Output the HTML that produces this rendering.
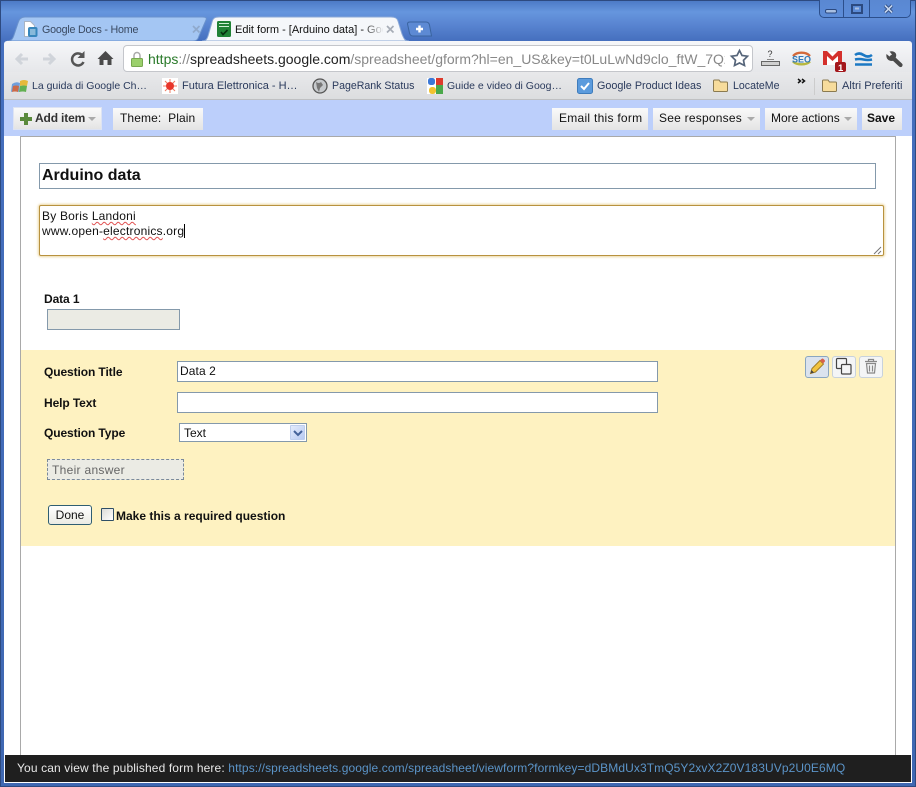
<!DOCTYPE html>
<html><head><meta charset="utf-8"><style>
html,body{margin:0;padding:0}
body{width:916px;height:787px;overflow:hidden;position:relative;background:#fff;font-family:"Liberation Sans",sans-serif;font-size:12px;color:#111}
.a{position:absolute;white-space:nowrap}
.bm{position:absolute;top:79px;color:#2a3a5c;white-space:nowrap;line-height:14px}
.btn{position:absolute;top:108px;height:22px;line-height:21px;background:linear-gradient(#fafafa,#e4e4e4);font-size:12px;color:#111;box-sizing:border-box;white-space:nowrap;letter-spacing:.2px}
.tr{position:absolute;top:117px;width:0;height:0;border:4px solid transparent;border-top:4px solid #aaa;border-bottom:0}
.lbl{position:absolute;font-weight:bold;font-size:12px;left:44px;white-space:nowrap;color:#111;line-height:14px;letter-spacing:-.1px}
.inp{position:absolute;box-sizing:border-box;background:#fff;border:1px solid #8499ab}
svg{position:absolute;overflow:visible}
</style></head><body>
<!-- frame -->
<div class="a" style="left:0;top:0;width:916px;height:787px;background:linear-gradient(#4a78c4 0,#6696de 12px,#5c88d4 22px,#456fbe 41px,#3f68b2 100%)"></div>
<div class="a" style="left:0;top:0;width:916px;height:1px;background:#2d4a80"></div>
<div class="a" style="left:0;top:0;width:1px;height:787px;background:#2d4a80"></div>
<div class="a" style="left:915px;top:0;width:1px;height:787px;background:#2d4a80"></div>
<div class="a" style="left:0;top:786px;width:916px;height:1px;background:#2d4a80"></div>

<!-- window buttons -->
<div class="a" style="left:819px;top:0;width:92px;height:18px;box-sizing:border-box;border:1px solid #2c4f8c;border-top:0;border-radius:0 0 5px 5px;background:linear-gradient(#5a88d2,#5c8cd8)"></div>
<div class="a" style="left:843px;top:0;width:1px;height:17px;background:#2c4f8c"></div>
<div class="a" style="left:869px;top:0;width:1px;height:17px;background:#2c4f8c"></div>
<svg style="left:819px;top:0" width="92" height="18">
<rect x="6.500" y="9.500" width="11" height="3.500" rx="1.500" fill="#a8bfe2" stroke="#2c4a80"/>
<rect x="33" y="5" width="10" height="8" fill="none" stroke="#2c4a80" stroke-width="2"/>
<path d="M36 8.500 h4" stroke="#a8bfe2" stroke-width="2"/>
<path d="M66 5.500 l7 7 M73 5.500 l-7 7" stroke="#2c4a80" stroke-width="3.400"/>
<path d="M66 5.500 l7 7 M73 5.500 l-7 7" stroke="#c6d6ee" stroke-width="1.600"/>
</svg>

<!-- tabs -->
<svg style="left:0;top:0" width="916" height="45">
<path d="M7 41 C12 41 13 38 14 35 L18 23 C19 19 21 17 25 17 L202 17 C206 17 207 18 206 20 L199 36 C198 40 196 41 193 41Z" fill="#a4c6f3" stroke="#6a92cc" stroke-width="1"/>
<path d="M202 41 C206 41 207 39 208 36 L212 22 C213 18 215 17 219 17 L391 17 C395 17 397 18 398 21 L402 34 C404 39 405 41 409 41Z" fill="#f5f7fa" stroke="#8aa8d6" stroke-width="1"/>
<path d="M407.500 24 C407.500 22.500 408.500 22 410 22 L426 22 C428 22 429 23 429.500 25 L431.500 36 L413 36 C411 36 410 35 409.500 33Z" fill="#5d8ad4" stroke="#3a649f" stroke-width="1"/>
<path d="M419.500 25.500 v7 M416 29 h7" stroke="#fff" stroke-width="2.400" fill="none"/>
<!-- docs icon -->
<path d="M24.500 21.500 h6 l4 4 v11 h-10z" fill="#fff" stroke="#a8b4c4" stroke-width="1"/>
<rect x="28" y="27" width="9.500" height="10" rx="2" fill="#3786bc"/>
<path d="M30 30 h5.500 M30 32 h5.500 M30 34 h5.500" stroke="#d8ecf8" stroke-width="1"/>
<!-- form icon -->
<rect x="217" y="21" width="14" height="16" rx="1.500" fill="#208236"/>
<path d="M219 23.500 h10 M219 26.500 h10" stroke="#cfeed4" stroke-width="1"/>
<path d="M221 32 l2 2.500 l4.500 -4.500" stroke="#07300f" stroke-width="1.600" fill="none"/>
<path d="M193 26 l6.500 6.500 M199.500 26 l-6.500 6.500" stroke="#8fa9cc" stroke-width="1.700"/>
<path d="M387 26 l6.500 6.500 M393.500 26 l-6.500 6.500" stroke="#a6acb6" stroke-width="1.700"/>
</svg>
<div class="a" style="left:42px;top:23px;font-size:10.700px;letter-spacing:-.2px;color:#3a4a62;line-height:14px">Google Docs - Home</div>
<div class="a" style="left:235px;top:23px;width:148px;overflow:hidden;font-size:11px;color:#111;line-height:14px">Edit form - [Arduino data] - Google</div>
<div class="a" style="left:362px;top:20px;width:22px;height:20px;background:linear-gradient(90deg,rgba(245,247,250,0),#f5f7fa)"></div>

<!-- toolbar -->
<div class="a" style="left:4px;top:41px;width:908px;height:31px;background:linear-gradient(#f6f7f9,#e6e7ea);border-radius:3px 3px 0 0"></div>
<div class="a" style="left:4px;top:72px;width:908px;height:28px;background:linear-gradient(#e8e9eb,#dcdddf);border-bottom:1px solid #bfc0c2;box-sizing:border-box"></div>
<svg style="left:0;top:41px" width="130" height="31">
<path d="M28 18 h-11 m5 -5 l-5 5 l5 5" stroke="#d0d4da" stroke-width="3" fill="none"/>
<path d="M43 18 h11 m-5 -5 l5 5 l-5 5" stroke="#d0d4da" stroke-width="3" fill="none"/>
<path d="M83 15 a6 6 0 1 0 0.500 6" stroke="#555" stroke-width="2.500" fill="none"/>
<path d="M84.500 10 v7 h-7z" fill="#555"/>
<path d="M105.500 10 l8 8 h-2 v6 h-4 v-5 h-4 v5 h-4 v-6 h-2z" fill="#4a4a4a"/>
</svg>
<!-- omnibox -->
<div class="a" style="left:123px;top:45px;width:630px;height:27px;box-sizing:border-box;background:#fff;border:1px solid #c4c6cb;border-radius:4px"></div>
<svg style="left:130px;top:50px" width="16" height="18">
<path d="M4 8 V5.500 a3 3 0 0 1 6 0 V8" stroke="#aaa" stroke-width="1.500" fill="none"/>
<rect x="1.500" y="8.500" width="11" height="8" rx="1" fill="#9bd06c" stroke="#78a850"/>
</svg>
<div class="a" style="left:148px;top:50px;width:577px;overflow:hidden;font-size:14px;line-height:18px;color:#888"><span style="color:#2a7a2a">https</span>://<span style="color:#222">spreadsheets.google.com</span>/spreadsheet/gform?hl=en_US&amp;key=t0LuLwNd9clo_ftW_7Q2</div>
<svg style="left:730px;top:48px" width="20" height="20">
<path d="M9.500 2.500 L12 7.500 L17.500 8.200 L13.500 12.300 L14.500 17.500 L9.500 15 L4.500 17.500 L5.500 12.300 L1.500 8.200 L7 7.500Z" fill="#fff" stroke="#56657a" stroke-width="1.700"/>
</svg>
<!-- ext icons -->
<svg style="left:755px;top:45px" width="155" height="27">
<path d="M6.500 16.500 h18 v4 h-18z" fill="#d0d0d0" stroke="#666"/>
<text x="12.500" y="12" font-family="Liberation Sans" font-size="9" fill="#333">?</text>
<path d="M12 14.500 h7" stroke="#888"/>
<path d="M38 11 a10 7 0 0 1 17 0" fill="none" stroke="#d2693a" stroke-width="2.400"/>
<path d="M38 16.500 a10 6 0 0 0 17 0" fill="none" stroke="#b8b83e" stroke-width="2.400"/>
<text x="37" y="17.500" font-family="Liberation Sans" font-size="9.500" font-weight="bold" fill="#2f79b9" textLength="19" lengthAdjust="spacingAndGlyphs">SEO</text>
<rect x="68" y="7" width="19" height="13" fill="#fff"/>
<path d="M68 6 h4 l5.500 5.500 l5.500 -5.500 h4 v14 h-4 v-9 l-5.500 5 l-5.500 -5 v9 h-4z" fill="#d4302c"/>
<rect x="80" y="17" width="11" height="10" rx="2" fill="#a3171c"/>
<text x="83" y="26" font-family="Liberation Sans" font-size="9.500" font-weight="bold" fill="#fff">1</text>
<path d="M100 10 q4 -3 8.500 0 t8.500 0 M100 14.500 q4 -1 8.500 0 t8.500 0 M100 19.500 h17" stroke="#1c79c4" stroke-width="2.600" fill="none"/>
<path d="M137 12 l8.500 8" stroke="#4a4a4a" stroke-width="4.200" stroke-linecap="round"/>
<path d="M131.500 9 l3 2.500 l2.500 -2 l-2.500 -3 q4 -1 6 1.500 q1.500 2 0 5 l-3 3 q-4 0 -5.500 -2.500 q-1 -2 -.500 -4.500z" fill="#4a4a4a"/>
</svg>

<!-- bookmarks -->
<svg style="left:0;top:72px" width="916" height="28">
<path d="M12 12 q4 -3 8 -1 l-1 9 q-4 -2 -8 0z" fill="#6f9fdc"/>
<path d="M20 9 q4 -2 8 0 l-1 5 q-4 -1 -7 0z" fill="#e6b93a"/>
<path d="M13 14 q3 -1 6 0 l-1 6 q-3 -1 -6 0z" fill="#cc6a48"/>
<path d="M20 14 q4 -1 7 0 l-1 6 q-3 -1 -7 0z" fill="#62b052"/>
<rect x="162" y="6" width="16" height="16" fill="#fff"/>
<path d="M170 7 v14 M163 14 h14 M165 9 l10 10 M175 9 l-10 10" stroke="#ef7a60" stroke-width="1"/>
<circle cx="170" cy="14" r="4" fill="#e8352a"/>
<circle cx="320" cy="14" r="7" fill="#c6c9cc" stroke="#555" stroke-width="1.300"/>
<path d="M316 10 q3 2 5 0 l2 3 l-3 3 l-1 4 l-2 -4z" fill="#777"/>
<rect x="427" y="6" width="16" height="16" fill="#fff"/>
<rect x="428" y="6" width="7" height="7" rx="2.500" fill="#3b78d7"/><rect x="436" y="6" width="7" height="7" fill="#dd3a2c"/>
<rect x="436" y="13" width="7" height="9" fill="#4aa84a"/><rect x="429" y="15" width="7" height="7" rx="3" fill="#f1c22e"/>
<rect x="577.500" y="6.500" width="15" height="15" rx="2" fill="#5b9bdd" stroke="#3e7cbc"/>
<path d="M581 14 l3 3 l5 -6" stroke="#fff" stroke-width="2" fill="none"/>
<path d="M713.500 9 v9.500 q0 1 1 1 h12 q1 0 1 -1 v-7.500 q0 -1 -1 -1 h-6 l-1.500 -2 h-4.500 q-1 0 -1 1z" fill="#f7dc9c" stroke="#8b7a50"/>
<path d="M822.500 9 v9.500 q0 1 1 1 h12 q1 0 1 -1 v-7.500 q0 -1 -1 -1 h-6 l-1.500 -2 h-4.500 q-1 0 -1 1z" fill="#f7dc9c" stroke="#8b7a50"/>
<path d="M798 7 l2.500 2 l-2.500 2 M802 7 l2.500 2 l-2.500 2" stroke="#111" stroke-width="1.500" fill="none"/>
<path d="M814.500 6 v17" stroke="#ccc"/>
</svg>
<div class="bm" style="left:32px;font-size:10.500px">La guida di Google Ch…</div>
<div class="bm" style="left:182px;font-size:11px">Futura Elettronica - H…</div>
<div class="bm" style="left:332px;font-size:10.600px">PageRank Status</div>
<div class="bm" style="left:447px;font-size:10.500px">Guide e video di Goog…</div>
<div class="bm" style="left:597px;font-size:10.800px">Google Product Ideas</div>
<div class="bm" style="left:733px;font-size:10.600px">LocateMe</div>
<div class="bm" style="left:842px;font-size:11.100px">Altri Preferiti</div>

<!-- app bar -->
<div class="a" style="left:4px;top:100px;width:908px;height:36px;background:#bccffb"></div>
<div class="btn" style="left:13px;top:107px;height:23px;width:89px;border:1px solid #dde3f3;font-weight:bold;color:#333;padding-left:21px;line-height:21px;letter-spacing:-.15px">Add item</div>
<div class="tr" style="left:88px"></div>
<svg style="left:20px;top:113px" width="13" height="13"><path d="M4 0 h4 v4 h4 v4 h-4 v4 h-4 v-4 h-4 v-4 h4z" fill="#5a8a3c"/></svg>
<div class="btn" style="left:113px;width:90px;padding-left:7px;letter-spacing:.1px">Theme:&nbsp; Plain</div>
<div class="btn" style="left:552px;width:96px;padding-left:7px;letter-spacing:.27px">Email this form</div>
<div class="btn" style="left:653px;width:107px;padding-left:6px;letter-spacing:.23px">See responses</div>
<div class="tr" style="left:747px"></div>
<div class="btn" style="left:765px;width:92px;padding-left:6px;letter-spacing:0">More actions</div>
<div class="tr" style="left:844px"></div>
<div class="btn" style="left:862px;width:40px;font-weight:bold;padding-left:5px;letter-spacing:0">Save</div>

<!-- page -->
<div class="a" style="left:4px;top:136px;width:908px;height:647px;background:#fff"></div>
<div class="a" style="left:20px;top:136px;width:876px;height:619px;box-sizing:border-box;border:1px solid #a9a9a9;border-bottom:0"></div>

<div class="inp" style="left:39px;top:163px;width:837px;height:26px;font-size:16px;font-weight:bold;line-height:24px;padding-left:2px;color:#111">Arduino data</div>
<div class="inp" style="left:39px;top:205px;width:845px;height:51px;border:1px solid #b8923f;box-shadow:0 0 2px 1px rgba(228,196,120,.7);border-radius:2px;font-size:12px;line-height:15px;padding:3px 2px;color:#111;white-space:nowrap;letter-spacing:.2px">By Boris <span style="text-decoration:underline wavy #e05050 1px">Landoni</span><br>www.open-<span style="text-decoration:underline wavy #e05050 1px">electronics</span>.org<span style="display:inline-block;width:1px;height:14px;background:#000;vertical-align:-3px"></span></div>
<svg style="left:873px;top:246px" width="9" height="9"><path d="M8 1 L1 8 M8 5 L5 8" stroke="#777"/></svg>

<div class="lbl" style="top:292px">Data 1</div>
<div class="inp" style="left:47px;top:309px;width:133px;height:21px;background:#ebebe4"></div>

<!-- edit panel -->
<div class="a" style="left:21px;top:350px;width:874px;height:196px;background:#fef2c1"></div>
<div class="lbl" style="top:365px">Question Title</div>
<div class="inp" style="left:177px;top:361px;width:481px;height:21px;font-size:12px;line-height:19px;padding-left:2px;letter-spacing:.1px">Data 2</div>
<div class="lbl" style="top:396px">Help Text</div>
<div class="inp" style="left:177px;top:392px;width:481px;height:21px"></div>
<div class="lbl" style="top:426px">Question Type</div>
<div class="inp" style="left:179px;top:423px;width:128px;height:19px;font-size:12px;line-height:18px;padding-left:4px">Text</div>
<div class="a" style="left:290px;top:425px;width:15px;height:15px;box-sizing:border-box;border:1px solid #bfcfee;background:linear-gradient(135deg,#e4ecfc,#b8caf2);border-radius:1px"></div>
<svg style="left:293px;top:429px" width="10" height="8"><path d="M1 2 l4 4 l4 -4" stroke="#44629a" stroke-width="2" fill="none"/></svg>
<div class="a" style="left:47px;top:459px;width:137px;height:21px;box-sizing:border-box;border:1px dashed #7b8a9a;background:#ebebe4;color:#666;font-size:12px;line-height:20px;padding-left:4px;letter-spacing:.3px">Their answer</div>

<div class="a" style="left:48px;top:505px;width:44px;height:20px;box-sizing:border-box;border:1px solid #2f5e72;border-radius:3px;background:linear-gradient(#fff,#ebebe3);font-size:12px;line-height:18px;text-align:center;color:#111">Done</div>
<div class="a" style="left:101px;top:508px;width:13px;height:13px;box-sizing:border-box;border:1px solid #2f4f66;border-radius:1px;background:linear-gradient(135deg,#dcdcd6,#fff)"></div>
<div class="a" style="left:116px;top:509px;font-weight:bold;font-size:12px;line-height:14px;color:#111">Make this a required question</div>

<!-- edit icons -->
<div class="a" style="left:805px;top:356px;width:24px;height:22px;box-sizing:border-box;border:1px solid #8aa6c0;border-radius:3px;background:#dbe3ee"></div>
<div class="a" style="left:832px;top:356px;width:24px;height:22px;box-sizing:border-box;border:1px solid #c8d2dc;border-radius:3px;background:#f4f5f6"></div>
<div class="a" style="left:859px;top:356px;width:24px;height:22px;box-sizing:border-box;border:1px solid #c8d2dc;border-radius:3px;background:#f4f5f6"></div>
<svg style="left:805px;top:356px" width="80" height="22">
<path d="M5.500 17.500 l1.500 -5 l8 -8 l3.500 3.500 l-8 8z" fill="#f2c440" stroke="#a07c28"/>
<path d="M15 4.500 l1.500 -1.500 q1 -1 2 0 l1 1 q1 1 0 2 l-1.500 1.500z" fill="#d8614c"/>
<path d="M5.500 17.500 l1 -3.500 l2.500 2.500z" fill="#444"/>
<rect x="31.500" y="2.500" width="10" height="10" rx="1" fill="none" stroke="#444" stroke-width="1.200"/>
<rect x="36.500" y="8.500" width="9.500" height="9.500" rx="1" fill="#f4f5f6" stroke="#444" stroke-width="1.200"/>
<path d="M60 5.500 h12 M63.500 5 v-1.500 h5 v1.500 M61.500 7.500 l1 9.500 h7 l1 -9.500z M64.500 9.500 v6 M67.500 9.500 v6" fill="none" stroke="#888" stroke-width="1.200"/>
</svg>

<!-- bottom bar -->
<div class="a" style="left:5px;top:755px;width:906px;height:27px;background:#1f1f1f;font-size:12px;line-height:27px;padding-left:12px;box-sizing:border-box;color:#e8e8e8;letter-spacing:.13px">You can view the published form here: <span style="color:#5b94c8;letter-spacing:.095px">https://spreadsheets.google.com/spreadsheet/viewform?formkey=dDBMdUx3TmQ5Y2xvX2Z0V183UVp2U0E6MQ</span></div>
</body></html>
